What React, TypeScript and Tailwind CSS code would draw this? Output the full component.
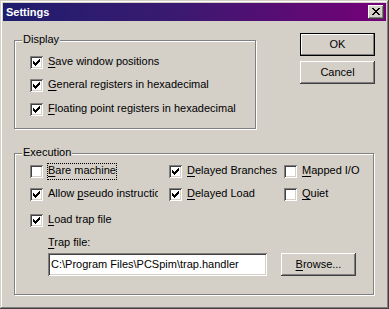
import type { ReactNode } from 'react';

/* ---------- bevels ---------- */
const raised =
  'shadow-[inset_-1px_-1px_0_#404040,inset_1px_1px_0_#ffffff,inset_-2px_-2px_0_#808080,inset_2px_2px_0_#d4d0c8]';
const sunken =
  'shadow-[inset_1px_1px_0_#808080,inset_-1px_-1px_0_#ffffff,inset_2px_2px_0_#404040,inset_-2px_-2px_0_#d4d0c8]';

const CHECK_ROWS = ['......#', '.....##', '#...###', '##.###.', '#####..', '.###...', '..#....'];
const X_ROWS = ['##....##', '.##..##.', '..####..', '...##...', '..####..', '.##..##.', '##....##'];

function PixelGlyph({ rows, x, y }: { rows: string[]; x: number; y: number }) {
  return (
    <svg className="absolute left-0 top-0" width="16" height="14" shapeRendering="crispEdges">
      {rows.flatMap((row, r) =>
        row.split('').map((c, i) =>
          c === '#' ? <rect key={`${r}-${i}`} x={x + i} y={y + r} width="1" height="1" fill="#000" /> : null
        )
      )}
    </svg>
  );
}

function Checkbox({ checked }: { checked: boolean }) {
  return (
    <span className={`relative block w-[13px] h-[13px] shrink-0 bg-white ${sunken}`}>
      {checked && <PixelGlyph rows={CHECK_ROWS} x={3} y={3} />}
    </span>
  );
}

interface CheckItemProps {
  checked: boolean;
  children: ReactNode;
  focused?: boolean;
  clip?: boolean;
}

function CheckItem({ checked, children, focused, clip }: CheckItemProps) {
  return (
    <div className="flex items-center h-[17px] gap-[4px]">
      <Checkbox checked={checked} />
      <span
        className={`block h-[17px] leading-[13px] border whitespace-nowrap ${
          focused ? 'border-dotted border-black' : 'border-transparent'
        } ${clip ? 'w-[112px] overflow-hidden' : ''}`}
      >
        {children}
      </span>
    </div>
  );
}

function Key({ children }: { children: ReactNode }) {
  return <u className="underline underline-offset-[2px]">{children}</u>;
}

function GroupBox({ label, className, children }: { label: string; className: string; children: ReactNode }) {
  return (
    <div
      className={`relative border border-[#808080] shadow-[inset_1px_1px_0_#ffffff,1px_1px_0_#ffffff] ${className}`}
    >
      <span className="absolute left-[7px] -top-[8px] px-[1px] bg-[#d4d0c8] leading-[13px]">{label}</span>
      {children}
    </div>
  );
}

function Button({ children, isDefault }: { children: ReactNode; isDefault?: boolean }) {
  return (
    <div
      className={`w-[75px] h-[23px] flex items-center justify-center ${
        isDefault
          ? 'border border-black shadow-[inset_-1px_-1px_0_#808080,inset_1px_1px_0_#ffffff]'
          : raised
      }`}
    >
      {children}
    </div>
  );
}

/* ---------- page ---------- */
export default function App() {
  return (
    <div
      className="w-[389px] h-[309px] p-[3px] bg-[#d4d0c8] text-black text-[11px] shadow-[inset_-1px_-1px_0_#404040,inset_1px_1px_0_#d4d0c8,inset_-2px_-2px_0_#808080,inset_2px_2px_0_#ffffff]"
      style={{ fontFamily: '"Liberation Sans", Arial, sans-serif' }}
    >
      {/* title bar */}
      <div className="h-[18px] flex items-center justify-between pl-[3px] pr-[2px] bg-[linear-gradient(to_right,#1f1d6e,#3a1a70_45%,#760078)]">
        <span className="text-white font-bold leading-[18px]">Settings</span>
        <div className={`relative w-[16px] h-[14px] bg-[#d4d0c8] ${raised}`}>
          <PixelGlyph rows={X_ROWS} x={4} y={3} />
        </div>
      </div>

      {/* top row */}
      <div className="flex items-start mt-[12px] pl-[11px]">
        <div className="mt-[7px]">
          <GroupBox label="Display" className="w-[242px] h-[89px] pl-[15px] pt-[13px]">
            <CheckItem checked>
              <Key>S</Key>ave window positions
            </CheckItem>
            <div className="mt-[6px]">
              <CheckItem checked>
                <Key>G</Key>eneral registers in hexadecimal
              </CheckItem>
            </div>
            <div className="mt-[7px]">
              <CheckItem checked>
                <Key>F</Key>loating point registers in hexadecimal
              </CheckItem>
            </div>
          </GroupBox>
        </div>
        <div className="ml-[44px] flex flex-col gap-[5px]">
          <Button isDefault>OK</Button>
          <Button>Cancel</Button>
        </div>
      </div>

      {/* execution */}
      <GroupBox label="Execution" className="ml-[11px] mt-[24px] w-[360px] h-[142px] pl-[15px] pt-[9px]">
        <div className="grid grid-cols-[139px_115px_auto] gap-y-[6px]">
          <CheckItem checked={false} focused>
            <Key>B</Key>are machine
          </CheckItem>
          <CheckItem checked>
            <Key>D</Key>elayed Branches
          </CheckItem>
          <CheckItem checked={false}>
            <Key>M</Key>apped I/O
          </CheckItem>
          <CheckItem checked clip>
            Allow <Key>p</Key>seudo instructions
          </CheckItem>
          <CheckItem checked>
            <Key>D</Key>elayed Load
          </CheckItem>
          <CheckItem checked={false}>
            <Key>Q</Key>uiet
          </CheckItem>
        </div>
        <div className="mt-[9px]">
          <CheckItem checked>
            <Key>L</Key>oad trap file
          </CheckItem>
        </div>
        <div className="mt-[7px] pl-[18px] leading-[13px]">
          <Key>T</Key>rap file:
        </div>
        <div className="mt-[4px] pl-[18px] flex items-center gap-[14px]">
          <div className={`w-[219px] h-[23px] bg-white flex items-center pl-[3px] whitespace-nowrap ${sunken}`}>
            {'C:\\Program Files\\PCSpim\\trap.handler'}
          </div>
          <Button>
            <Key>B</Key>rowse...
          </Button>
        </div>
      </GroupBox>
    </div>
  );
}
